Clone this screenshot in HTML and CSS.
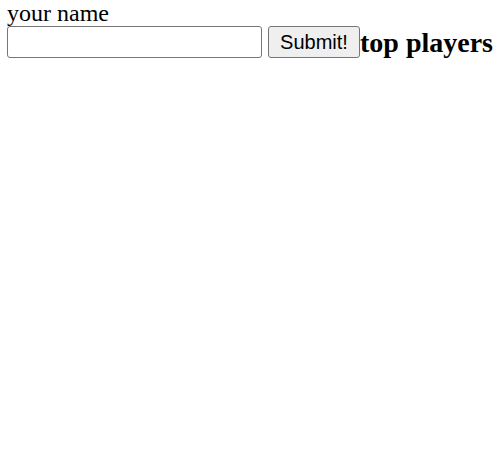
FILE: index.html
```html
<!DOCTYPE html>
<html>
<head>
<meta charset="utf-8">
<link rel="stylesheet" href="styles.css">
</head>
<body>
<form class="name-form">
  <label class="name-label" for="name">your name</label>
  <div class="row">
    <input class="name-input" id="name" type="text">
    <button class="submit-btn" type="button">Submit!</button>
    <h3 class="players-title">top players</h3>
  </div>
</form>
</body>
</html>
```
FILE: styles.css
```css
html, body {
  margin: 0;
  padding: 0;
  background: #ffffff;
}
body {
  padding-left: 7px;
  font-family: "Liberation Serif", "Times New Roman", serif;
  color: #000;
}
.name-form {
  margin: 0;
}
.name-label {
  display: block;
  font-size: 24px;
  line-height: 26px;
}
.row {
  display: flex;
  align-items: flex-start;
}
.name-input {
  box-sizing: border-box;
  width: 255px;
  height: 32px;
  margin: 0;
  border: 1px solid #767676;
  border-radius: 3px;
  background: #fff;
  padding: 0 3px;
}
.submit-btn {
  box-sizing: border-box;
  margin: 0 0 0 6px;
  width: 92px;
  height: 32px;
  font-family: "Liberation Sans", Arial, sans-serif;
  font-size: 20px;
  color: #000;
  background: #efefef;
  border: 1px solid #767676;
  border-radius: 3px;
  padding: 0;
}
.players-title {
  margin: 0;
  font-size: 28px;
  line-height: 34px;
  font-weight: bold;
}
```
